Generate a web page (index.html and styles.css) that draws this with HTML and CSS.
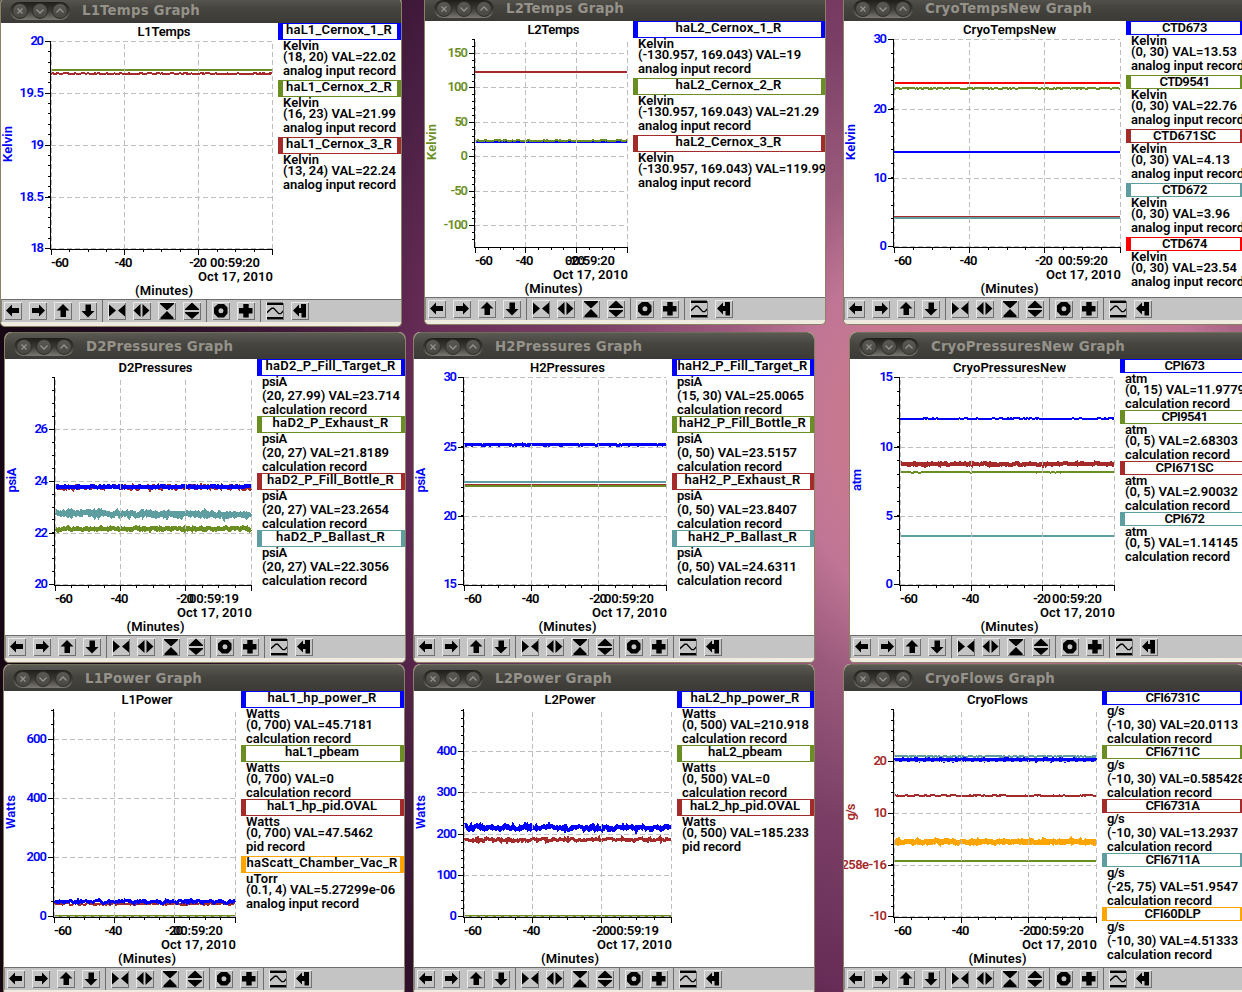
FILE: index.html
```html
<!DOCTYPE html>
<html lang="en">
<head>
<meta charset="utf-8">
<title>Strip charts</title>
<link rel="stylesheet" href="styles.css">
</head>
<body>
<main class="desktop" id="desktop"></main>
<script src="app.js"></script>
</body>
</html>
```
FILE: styles.css
```css
* { box-sizing: border-box; }

body {
  margin: 0;
  overflow: hidden;
}

.desktop {
  position: relative;
  width: 1242px;
  height: 992px;
  overflow: hidden;
  background: radial-gradient(circle at 1000px 430px, #cf7d95 0, #c8798f 150px, #c07595 210px, #9a5a7c 290px, #7b3f66 420px, #672c57 580px, #4a1f43 670px, #2a0e28 830px, #170714 1000px);
}

.window {
  position: absolute;
  width: 402px;
  height: 331px;
  display: flex;
  flex-direction: column;
  border: 1px solid #8a8063;
  border-top: 0;
  border-radius: 7px 7px 5px 5px;
  overflow: hidden;
  background: #efebe1;
}

.titlebar {
  flex: none;
  height: 27px;
  padding: 1px 0 0 9px;
  display: flex;
  align-items: center;
  gap: 12px;
  background: linear-gradient(#5a5952, #45443f 45%, #3b3a36);
  border-top: 1px solid #716d5c;
  border-radius: 7px 7px 0 0;
}

.controls {
  display: flex;
  align-items: center;
  width: 60px;
  height: 18px;
  padding: 0 2px;
  gap: 4px;
  border-radius: 9px;
  background: linear-gradient(#1f1e1a, #3b3a35 50%, #7a7870);
}

.control {
  width: 16px;
  height: 16px;
  border-radius: 50%;
  background: linear-gradient(#5a5953, #484741);
  border: 1px solid #302f2b;
}

.control svg { display: block; }

.title {
  font: bold 13.33px/18px "DejaVu Sans", sans-serif;
  color: #95928a;
  white-space: nowrap;
}

.client {
  flex: none;
  display: flex;
  height: 276px;
  background: #fff;
}

.chart {
  flex: none;
  display: block;
  overflow: hidden;
}

.chart text {
  font: 600 13px Roboto, "Liberation Sans", sans-serif;
}

.legend {
  flex: 1;
  min-width: 0;
  display: flex;
  flex-direction: column;
  gap: 1px;
  font: 600 13px/11px Roboto, "Liberation Sans", sans-serif;
  color: #000;
  white-space: nowrap;
  overflow: hidden;
}

.name {
  height: 17px;
  display: flex;
  justify-content: center;
  border: solid;
  border-width: 1px 4px 1px 5px;
}

.name .fit { margin-left: -2px; }

.name.short { height: 14px; }

.line {
  height: 11px;
  padding-left: 5px;
}

.line.tall { height: 14px; }

.toolbar {
  flex: none;
  display: flex;
  height: 23px;
  padding: 2px 0 0 2px;
  background: #c4c4c4;
  border-top: 1px solid #6e6e6e;
  border-left: 1px solid #8a8a8a;
}

.group {
  display: flex;
  gap: 7px;
}

.group + .group {
  margin: -2px 0 0 5px;
  padding: 2px 0 0 5px;
  border-left: 1px solid #6e6e6e;
}

.tool {
  width: 18px;
  height: 18px;
  background: linear-gradient(#e9e9e9, #e9e9e9) 0 0 / 18px 1px no-repeat,
    linear-gradient(#e9e9e9, #e9e9e9) 0 0 / 1px 18px no-repeat,
    linear-gradient(#707070, #707070) 0 17px / 18px 1px no-repeat,
    linear-gradient(#707070, #707070) 17px 0 / 1px 18px no-repeat,
    #c4c4c4;
}

.tool svg { display: block; }
```
FILE: app.js
```js
const BLUE = '#0000ff', OLIVE = '#6b8e23', BROWN = '#a52a2a', TEAL = '#5f9ea0', RED = '#ff0000', ORANGE = '#ffa500';
const COLORS = [BLUE, OLIVE, BROWN, TEAL, RED];
const UNIT_WIDTH = { Kelvin: 36, psiA: 25, atm: 22, 'g/s': 17, Watts: 34, uTorr: 32 };
const ANALOG = 'analog input record', CALC = 'calculation record', PID = 'pid record';
const RECORD_WIDTH = { [ANALOG]: 113, [CALC]: 105, [PID]: 59 };

// series: [color, y, stroke width, noise amplitude, slope]
// legend: [name, name width, unit, value, record, color]
const WINDOWS = [
  { x: 1, y: 23, title: 'L1Temps', tw: 53, bar: 117, unit: 'Kelvin', color: BLUE, lx: 278, time: '00:59:20',
    xs: [51, 124, 198, 272], ys: [[41, '20'], [93, '19.5'], [145, '19'], [197, '18.5'], [248, '18']], minor: 5,
    series: [[OLIVE, 70, 2, 0], [BROWN, 73.6, 2, 0.35]],
    legend: [['haL1_Cernox_1_R', 106, 'Kelvin', '(18, 20) VAL=22.02', ANALOG], ['haL1_Cernox_2_R', 106, 'Kelvin', '(16, 23) VAL=21.99', ANALOG], ['haL1_Cernox_3_R', 106, 'Kelvin', '(13, 24) VAL=22.24', ANALOG]] },
  { x: 425, y: 21, title: 'L2Temps', tw: 52, bar: 117, unit: 'Kelvin', color: OLIVE, lx: 633, time: '00:59:20',
    xs: [475, 525, 576, 627], ys: [[53, '150'], [87, '100'], [122, '50'], [156, '0'], [191, '-50'], [225, '-100']], minor: 5,
    series: [[BROWN, 72, 2, 0], [BLUE, 142, 2, 0], [OLIVE, 140.6, 2, 0.25]],
    legend: [['haL2_Cernox_1_R', 106, 'Kelvin', '(-130.957, 169.043) VAL=19', ANALOG], ['haL2_Cernox_2_R', 106, 'Kelvin', '(-130.957, 169.043) VAL=21.29', ANALOG], ['haL2_Cernox_3_R', 106, 'Kelvin', '(-130.957, 169.043) VAL=119.99', ANALOG]] },
  { x: 844, y: 21, title: 'CryoTempsNew', tw: 93, bar: 166, unit: 'Kelvin', color: BLUE, lx: 1126, time: '00:59:20', short: true,
    xs: [894, 969, 1044, 1120], ys: [[39, '30'], [109, '20'], [178, '10'], [246, '0']], minor: 5,
    series: [[RED, 83, 2, 0], [OLIVE, 88.4, 2, 0.45], [BLUE, 152, 2, 0], [TEAL, 218, 2, 0], [BROWN, 216.5, 1, 0]],
    legend: [['CTD673', 45, 'Kelvin', '(0, 30) VAL=13.53', ANALOG], ['CTD9541', 50, 'Kelvin', '(0, 30) VAL=22.76', ANALOG], ['CTD671SC', 63, 'Kelvin', '(0, 30) VAL=4.13', ANALOG], ['CTD672', 45, 'Kelvin', '(0, 30) VAL=3.96', ANALOG], ['CTD674', 45, 'Kelvin', '(0, 30) VAL=23.54', ANALOG]] },
  { x: 5, y: 359, title: 'D2Pressures', tw: 74, bar: 146, unit: 'psiA', color: BLUE, lx: 257, time: '00:59:19',
    xs: [55, 120, 185, 251], ys: [[429, '26'], [481, '24'], [533, '22'], [584, '20']], minor: 4,
    series: [[BROWN, 487.4, 3, 1.5], [BLUE, 486.8, 4, 0.6], [TEAL, 513.2, 5, 1.4, 1.6], [OLIVE, 528.7, 4, 1]],
    legend: [['haD2_P_Fill_Target_R', 130, 'psiA', '(20, 27.99) VAL=23.714', CALC], ['haD2_P_Exhaust_R', 116, 'psiA', '(20, 27) VAL=21.8189', CALC], ['haD2_P_Fill_Bottle_R', 127, 'psiA', '(20, 27) VAL=23.2654', CALC], ['haD2_P_Ballast_R', 109, 'psiA', '(20, 27) VAL=22.3056', CALC]] },
  { x: 414, y: 359, title: 'H2Pressures', tw: 75, bar: 146, unit: 'psiA', color: BLUE, lx: 672, time: '00:59:20',
    xs: [464, 531, 598, 666], ys: [[377, '30'], [447, '25'], [516, '20'], [584, '15']], minor: 5,
    series: [[BLUE, 444.7, 3, 0.5], [TEAL, 482, 2, 0.1], [BROWN, 484.5, 1, 0], [OLIVE, 486, 2, 0]],
    legend: [['haH2_P_Fill_Target_R', 130, 'psiA', '(15, 30) VAL=25.0065', CALC], ['haH2_P_Fill_Bottle_R', 127, 'psiA', '(0, 50) VAL=23.5157', CALC], ['haH2_P_Exhaust_R', 116, 'psiA', '(0, 50) VAL=23.8407', CALC], ['haH2_P_Ballast_R', 109, 'psiA', '(0, 50) VAL=24.6311', CALC]] },
  { x: 850, y: 359, title: 'CryoPressuresNew', tw: 113, bar: 193, unit: 'atm', color: BLUE, lx: 1120, time: '00:59:20', short: true,
    xs: [900, 971, 1042, 1114], ys: [[377, '15'], [447, '10'], [516, '5'], [584, '0']], minor: 5,
    series: [[BLUE, 418.7, 2, 0.5], [BROWN, 464, 4, 0.8], [OLIVE, 472.2, 2, 0.3], [TEAL, 536, 2, 0]],
    legend: [['CPI673', 40, 'atm', '(0, 15) VAL=11.9779', CALC], ['CPI9541', 46, 'atm', '(0, 5) VAL=2.68303', CALC], ['CPI671SC', 58, 'atm', '(0, 5) VAL=2.90032', CALC], ['CPI672', 40, 'atm', '(0, 5) VAL=1.14145', CALC]] },
  { x: 4, y: 691, title: 'L1Power', tw: 51, bar: 116, unit: 'Watts', color: BLUE, lx: 241, time: '00:59:20',
    xs: [54, 114, 174, 235], ys: [[739, '600'], [798, '400'], [857, '200'], [916, '0']], minor: 4,
    series: [[BROWN, 904, 2, 0.9], [BLUE, 901.7, 3, 1.2], [OLIVE, 916, 2, 0]],
    legend: [['haL1_hp_power_R', 109, 'Watts', '(0, 700) VAL=45.7181', CALC], ['haL1_pbeam', 74, 'Watts', '(0, 700) VAL=0', CALC], ['haL1_hp_pid.OVAL', 110, 'Watts', '(0, 700) VAL=47.5462', PID], ['haScatt_Chamber_Vac_R', 151, 'uTorr', '(0.1, 4) VAL=5.27299e-06', ANALOG, ORANGE]] },
  { x: 414, y: 691, title: 'L2Power', tw: 51, bar: 116, unit: 'Watts', color: BLUE, lx: 677, time: '00:59:19',
    xs: [464, 532, 601, 671], ys: [[751, '400'], [792, '300'], [834, '200'], [875, '100'], [916, '0']], minor: 5,
    series: [[BLUE, 827.8, 4, 1.7], [BROWN, 839.7, 3, 1.3], [OLIVE, 916, 2, 0]],
    legend: [['haL2_hp_power_R', 109, 'Watts', '(0, 500) VAL=210.918', CALC], ['haL2_pbeam', 74, 'Watts', '(0, 500) VAL=0', CALC], ['haL2_hp_pid.OVAL', 110, 'Watts', '(0, 500) VAL=185.233', PID]] },
  { x: 844, y: 691, title: 'CryoFlows', tw: 61, bar: 129, unit: 'g/s', color: BROWN, lx: 1102, time: '00:59:20', short: true,
    xs: [894, 961, 1028, 1096], ys: [[761, '20'], [813, '10'], [865, '258e-16'], [916, '-10']], minor: 5,
    series: [[TEAL, 756.4, 2, 0.6], [BLUE, 759.8, 4, 0.5], [BROWN, 795.7, 2, 0.5], [ORANGE, 841.8, 5, 0.9], [OLIVE, 861, 2, 0]],
    legend: [['CFI6731C', 54, 'g/s', '(-10, 30) VAL=20.0113', CALC], ['CFI6711C', 54, 'g/s', '(-10, 30) VAL=0.585428', CALC], ['CFI6731A', 54, 'g/s', '(-10, 30) VAL=13.2937', CALC], ['CFI6711A', 54, 'g/s', '(-25, 75) VAL=51.9547', CALC], ['CFI60DLP', 56, 'g/s', '(-10, 30) VAL=4.51333', CALC, ORANGE]] }
];

const TOOLS = [
  ['M2 8.500 8 2.500V6H15V11H8V14.500Z', 'M16 8.500 10 2.500V6H3V11H10V14.500Z', 'M9 2 15.500 8.500H12V15H6.500V8.500H2.500Z', 'M9 15.500 2.500 9H6.500V2.500H12V9H15.500Z'],
  ['M1 2.500 8 8.500 1 14.500ZM17 2.500 10 8.500 17 14.500Z', 'M0.500 8.500 7.500 2V15ZM9.500 2 16.500 8.500 9.500 15Z', 'M2 1H16V2L9.500 8H8.500L2 2ZM9 9 15.500 15.500V17H2.500V15.500Z', 'M9 0.500 16 7V8H2V7ZM2 10H16V11L9 17 2 11Z'],
  ['M6 2H12L15.500 5.500V11.500L12 15.500H6L2 11.500V5.500ZM9 6.300A2.500 2.500 0 0 0 9 11.300A2.500 2.500 0 0 0 9 6.300Z', 'M6.300 2H11.700V6H15.500V11.500H11.700V15.500H6.300V11.500H2V6H6.300Z'],
  ['M1 0.500H17V3H1ZM1 15H17V17H1ZM1 9.500 5.500 5.500H8L13 11H14.500L17 8.300V10.300L15 12.300H12.500L7.500 7H6L1 11.500Z', 'M2 8.500 8 2.500V6H10V2H15V15.500H10.500V11H8V14.500Z']
];

const CONTROLS = ['M4.500 4.500 9.500 9.500M9.500 4.500 4.500 9.500', 'M3.500 5.500 7 9 10.500 5.500', 'M3.500 8.500 7 5 10.500 8.500'];

function numberWidth(s) {
  return [...s].reduce((w, c) => w + (/[0-9e]/.test(c) ? 7 : 4), 0);
}

function valueWidth(s) {
  return 53 + numberWidth(s.replace(/VAL=|[(), ]/g, ''));
}

function random(seed) {
  let s = seed;
  return () => (s = (s * 16807) % 2147483647) / 2147483647;
}

function text(x, y, s, width, anchor, extra) {
  return `<text x="${x}" y="${y}" text-anchor="${anchor || 'start'}" textLength="${width}" ${extra || ''}>${s}</text>`;
}

function chart(w, index) {
  const [x0, x40, x20, x1] = w.xs;
  const top = w.y + 18, base = w.y + 226;
  const mid = (x0 + x1) / 2 + 2.5;
  const next = random(97 + index * 131);
  let grid = '', ticks = '', series = '', labels = '';

  w.series.forEach(([color, y, width, noise, slope]) => {
    let d = '', level = 0;
    for (let x = x0; x <= x1; x++) {
      level = level * 0.35 + (next() + next() - 1) * noise * 1.5;
      const py = y + level + (slope || 0) * (x - x0) / (x1 - x0);
      d += (d ? 'L' : 'M') + x + ' ' + py.toFixed(1);
    }
    series += `<path d="${d}" fill="none" stroke="${color}" stroke-width="${width}"/>`;
  });

  w.xs.forEach(x => { grid += `M${x + 0.5} ${base}V${top}`; });
  w.ys.forEach(([y]) => { grid += `M${x0} ${y + 0.5}H${x1}`; });

  ticks += `M${x0 - 0.5} ${top}V${base + 1}M${x0} ${base + 0.5}H${x1 + 1}`;
  w.xs.forEach((x, i) => {
    ticks += `M${x + 0.5} ${base}v6`;
    if (i < 3) for (let k = 1; k < 4; k++) ticks += `M${Math.round(x + (w.xs[i + 1] - x) * k / 4) + 0.5} ${base}v3`;
  });
  const last = w.ys.length - 1;
  const step = (w.ys[last][0] - w.ys[0][0]) / last / w.minor;
  w.ys.forEach(([y, label]) => {
    ticks += `M${x0 - 6} ${y + 0.5}H${x0}`;
    labels += text(x0 - 7, y + 4, label, numberWidth(label) - 0.5, 'end', `fill="${w.color}"`);
  });
  const y0 = w.ys[0][0];
  for (let k = -30; k < 60; k++) {
    const y = Math.round(y0 + k * step);
    if (y >= top && y < base - 1) ticks += `M${x0 - 3} ${y + 0.5}H${x0}`;
  }

  labels += text(mid, w.y + 13, w.title, w.tw, 'middle');
  labels += text(x0, w.y + 244, '-60', 18);
  labels += text(x40 - 0.5, w.y + 244, '-40', 18, 'middle');
  labels += text(x20, w.y + 244, '-20', 18, 'middle');
  labels += text(x1 - 12, w.y + 244, w.time, 50, 'end');
  labels += text(x1 + 1, w.y + 258, 'Oct 17, 2010', 75, 'end');
  labels += text(mid, w.y + 272, '(Minutes)', 58, 'middle');
  const ly = w.y + 121;
  labels += text(w.x + 11, ly, w.unit, UNIT_WIDTH[w.unit], 'middle', `fill="${w.color}" transform="rotate(-90 ${w.x + 11} ${ly})"`);

  const width = w.lx - w.x;
  return `<svg class="chart" width="${width}" height="276" viewBox="${w.x} ${w.y} ${width} 276">
    <g shape-rendering="crispEdges">${series}
    <path d="${grid}" fill="none" stroke="#bebebe" stroke-dasharray="5 3"/>
    <path d="${ticks}" fill="none" stroke="#000"/></g>${labels}</svg>`;
}

function fitted(s, width) {
  return `<span class="fit" data-width="${width}">${s}</span>`;
}

function legend(w) {
  return w.legend.map(([name, nameWidth, unit, value, record, color], i) => {
    const tallUnit = /[pg]/.test(unit) ? ' tall' : '';
    const tallRecord = record === CALC ? '' : ' tall';
    return `<section class="entry">
      <div class="name${w.short ? ' short' : ''}" style="border-color:${color || COLORS[i]}">${fitted(name, nameWidth)}</div>
      <div class="line${tallUnit}">${fitted(unit, UNIT_WIDTH[unit])}</div>
      <div class="line tall">${fitted(value, valueWidth(value))}</div>
      <div class="line${tallRecord}">${fitted(record, RECORD_WIDTH[record])}</div>
    </section>`;
  }).join('');
}

const toolbar = TOOLS.map(group => `<div class="group">${group.map(d =>
  `<span class="tool"><svg width="18" height="18"><path fill-rule="evenodd" d="${d}"/></svg></span>`).join('')}</div>`).join('');

const controls = CONTROLS.map(d =>
  `<span class="control"><svg width="14" height="14"><path d="${d}" fill="none" stroke="#96938a" stroke-width="1.300"/></svg></span>`).join('');

document.getElementById('desktop').innerHTML = WINDOWS.map((w, i) => `
  <article class="window" style="left:${w.x - 1}px;top:${w.y - 27}px">
    <header class="titlebar"><div class="controls">${controls}</div><div class="title">${fitted(w.title + ' Graph', w.bar + 1)}</div></header>
    <div class="client">${chart(w, i)}<div class="legend">${legend(w)}</div></div>
    <div class="toolbar">${toolbar}</div>
  </article>`).join('');

document.querySelectorAll('.fit').forEach(el => {
  const natural = el.getBoundingClientRect().width;
  el.style.letterSpacing = ((el.dataset.width - natural) / el.textContent.length) + 'px';
});
```
